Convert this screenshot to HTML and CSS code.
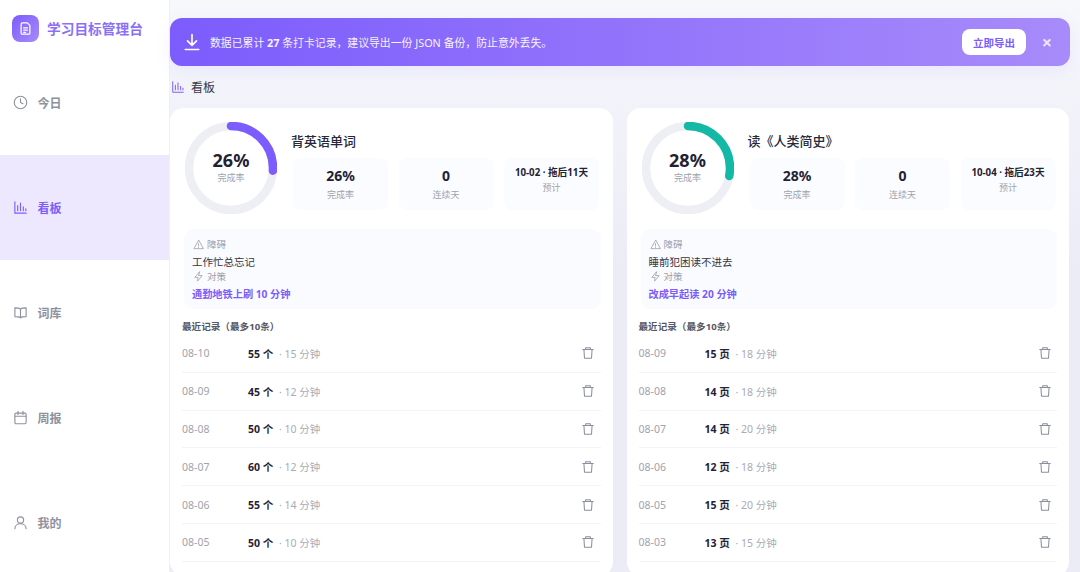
FILE: index.html
```html
<!DOCTYPE html>
<html lang="zh-CN">
<head>
    <meta charset="UTF-8">
    <meta name="viewport" content="width=device-width, initial-scale=1.0">
    <title>学习目标管理台</title>
    <link rel="stylesheet" href="styles.css">
</head>
<body>
    <svg class="sprite" aria-hidden="true">
        <symbol id="i-file" viewBox="0 0 24 24"><path d="M7 3h8l4 4v12a2 2 0 0 1-2 2H7a2 2 0 0 1-2-2V5a2 2 0 0 1 2-2z"/><path d="M9 11h6M9 14.500h6M9 18h3"/></symbol>
        <symbol id="i-download" viewBox="0 0 24 24"><path d="M12 2v14M6 10.500l6 6 6-6M3 22h18"/></symbol>
        <symbol id="i-chart" viewBox="0 0 24 24"><path d="M3 3v18h18"/><path d="M7.500 17V9M12 17V5M16.500 17v-6M20.500 17v-3"/></symbol>
        <symbol id="i-clock" viewBox="0 0 24 24"><circle cx="12" cy="12" r="10"/><path d="M12 6v6l4 2"/></symbol>
        <symbol id="i-book" viewBox="0 0 24 24"><path d="M12 6.500C10.500 5 8 4.500 3 4.500v14c5 0 7.500.5 9 2 1.500-1.500 4-2 9-2v-14c-5 0-7.500.5-9 2zM12 6.500v14"/></symbol>
        <symbol id="i-calendar" viewBox="0 0 24 24"><rect x="3" y="5" width="18" height="17" rx="2"/><path d="M8 2v5M16 2v5M3 10h18"/></symbol>
        <symbol id="i-user" viewBox="0 0 24 24"><circle cx="12" cy="8" r="5"/><path d="M3 22c0-5 4-8 9-8s9 3 9 8"/></symbol>
        <symbol id="i-trash" viewBox="0 0 24 24"><path d="M3 6h18M8 6V3h8v3M5 6l1 15h12l1-15"/></symbol>
        <symbol id="i-alert" viewBox="0 0 24 24"><path d="M12 3L2 21h20z"/><path d="M12 10v5M12 18v.5"/></symbol>
        <symbol id="i-zap" viewBox="0 0 24 24"><path d="M14 2L4 14h7l-1 8 10-12h-7z"/></symbol>
    </svg>

    <div class="app">
        <!-- Sidebar -->
        <aside class="sidebar">
            <div class="brand">
                <span class="brand-logo"><svg class="icon"><use href="#i-file"/></svg></span>
                <span class="brand-name">学习目标管理台</span>
            </div>
            <nav class="nav">
                <a class="nav-item"><svg class="icon"><use href="#i-clock"/></svg>今日</a>
                <a class="nav-item active"><svg class="icon"><use href="#i-chart"/></svg>看板</a>
                <a class="nav-item"><svg class="icon"><use href="#i-book"/></svg>词库</a>
                <a class="nav-item"><svg class="icon"><use href="#i-calendar"/></svg>周报</a>
                <a class="nav-item"><svg class="icon"><use href="#i-user"/></svg>我的</a>
            </nav>
        </aside>

        <main class="main">
            <!-- Backup banner -->
            <div class="banner">
                <svg class="icon banner-icon"><use href="#i-download"/></svg>
                <p class="banner-text">数据已累计 <b>27</b> 条打卡记录，建议导出一份 JSON 备份，防止意外丢失。</p>
                <button class="banner-btn">立即导出</button>
                <span class="banner-close">×</span>
            </div>

            <h2 class="page-title"><svg class="icon"><use href="#i-chart"/></svg>看板</h2>

            <div class="cards">
                <!-- Card 1 -->
                <section class="card">
                    <div class="card-top">
                        <div class="ring">
                            <svg viewBox="0 0 92 92">
                                <circle class="ring-bg" cx="46" cy="46" r="42"/>
                                <circle class="ring-bar" cx="46" cy="46" r="42" stroke-dasharray="68.6 264"/>
                            </svg>
                            <div class="ring-text"><strong>26%</strong><span>完成率</span></div>
                        </div>
                        <div class="card-info">
                            <h3>背英语单词</h3>
                            <div class="stats">
                                <div class="stat"><strong>26%</strong><span>完成率</span></div>
                                <div class="stat"><strong>0</strong><span>连续天</span></div>
                                <div class="stat stat-small"><strong>10-02 · 拖后11天</strong><span>预计</span></div>
                            </div>
                        </div>
                    </div>
                    <div class="plan">
                        <div class="plan-label"><svg class="icon"><use href="#i-alert"/></svg>障碍</div>
                        <div class="plan-text">工作忙总忘记</div>
                        <div class="plan-label"><svg class="icon"><use href="#i-zap"/></svg>对策</div>
                        <div class="plan-fix">通勤地铁上刷 10 分钟</div>
                    </div>
                    <div class="records-title">最近记录（最多10条）</div>
                    <ul class="records">
                        <li><span class="date">08-10</span><span class="amount"><b>55 个</b> · 15 分钟</span><svg class="icon"><use href="#i-trash"/></svg></li>
                        <li><span class="date">08-09</span><span class="amount"><b>45 个</b> · 12 分钟</span><svg class="icon"><use href="#i-trash"/></svg></li>
                        <li><span class="date">08-08</span><span class="amount"><b>50 个</b> · 10 分钟</span><svg class="icon"><use href="#i-trash"/></svg></li>
                        <li><span class="date">08-07</span><span class="amount"><b>60 个</b> · 12 分钟</span><svg class="icon"><use href="#i-trash"/></svg></li>
                        <li><span class="date">08-06</span><span class="amount"><b>55 个</b> · 14 分钟</span><svg class="icon"><use href="#i-trash"/></svg></li>
                        <li><span class="date">08-05</span><span class="amount"><b>50 个</b> · 10 分钟</span><svg class="icon"><use href="#i-trash"/></svg></li>
                    </ul>
                </section>

                <!-- Card 2 -->
                <section class="card">
                    <div class="card-top">
                        <div class="ring ring-green">
                            <svg viewBox="0 0 92 92">
                                <circle class="ring-bg" cx="46" cy="46" r="42"/>
                                <circle class="ring-bar" cx="46" cy="46" r="42" stroke-dasharray="73.9 264"/>
                            </svg>
                            <div class="ring-text"><strong>28%</strong><span>完成率</span></div>
                        </div>
                        <div class="card-info">
                            <h3>读《人类简史》</h3>
                            <div class="stats">
                                <div class="stat"><strong>28%</strong><span>完成率</span></div>
                                <div class="stat"><strong>0</strong><span>连续天</span></div>
                                <div class="stat stat-small"><strong>10-04 · 拖后23天</strong><span>预计</span></div>
                            </div>
                        </div>
                    </div>
                    <div class="plan">
                        <div class="plan-label"><svg class="icon"><use href="#i-alert"/></svg>障碍</div>
                        <div class="plan-text">睡前犯困读不进去</div>
                        <div class="plan-label"><svg class="icon"><use href="#i-zap"/></svg>对策</div>
                        <div class="plan-fix">改成早起读 20 分钟</div>
                    </div>
                    <div class="records-title">最近记录（最多10条）</div>
                    <ul class="records">
                        <li><span class="date">08-09</span><span class="amount"><b>15 页</b> · 18 分钟</span><svg class="icon"><use href="#i-trash"/></svg></li>
                        <li><span class="date">08-08</span><span class="amount"><b>14 页</b> · 18 分钟</span><svg class="icon"><use href="#i-trash"/></svg></li>
                        <li><span class="date">08-07</span><span class="amount"><b>14 页</b> · 20 分钟</span><svg class="icon"><use href="#i-trash"/></svg></li>
                        <li><span class="date">08-06</span><span class="amount"><b>12 页</b> · 18 分钟</span><svg class="icon"><use href="#i-trash"/></svg></li>
                        <li><span class="date">08-05</span><span class="amount"><b>15 页</b> · 20 分钟</span><svg class="icon"><use href="#i-trash"/></svg></li>
                        <li><span class="date">08-03</span><span class="amount"><b>13 页</b> · 15 分钟</span><svg class="icon"><use href="#i-trash"/></svg></li>
                    </ul>
                </section>
            </div>
        </main>
    </div>
</body>
</html>
```

FILE: styles.css
```css
* { margin: 0; padding: 0; box-sizing: border-box; }
html, body { height: 100%; overflow: hidden; }
body { font-family: "Noto Sans", "Noto Sans CJK SC", sans-serif; color: #1f2233; background: #f4f5fb; }

.sprite { display: none; }
.icon { fill: none; stroke: currentColor; stroke-width: 2; stroke-linecap: round; stroke-linejoin: round; flex-shrink: 0; }

.app { display: flex; height: 100vh; }

/* sidebar */
.sidebar { width: 170px; flex-shrink: 0; display: flex; flex-direction: column; background: #fff; border-right: 1px solid #eef0f6; }
.brand { height: 50px; flex-shrink: 0; display: flex; align-items: flex-start; gap: 8px; padding: 15px 0 0 12px; }
.brand-logo { width: 27px; height: 27px; border-radius: 8px; display: flex; align-items: center; justify-content: center; color: #fff; background: linear-gradient(135deg, #7c5cfc, #a78bfa); }
.brand-logo .icon { width: 15px; height: 15px; }
.brand-name { font-size: 13.700px; line-height: 28px; font-weight: 700; color: #8b6ff5; }
.nav { display: flex; flex-direction: column; }
.nav-item { height: 105px; flex-shrink: 0; display: flex; align-items: center; gap: 10px; padding-left: 12.500px; font-size: 12px; font-weight: 700; color: #8e929e; }
.nav-item .icon { width: 15px; height: 15px; stroke-width: 1.800; }
.nav-item.active { background: #eee8fe; color: #7c5cfc; }

/* main */
.main { flex: 1; min-width: 0; padding: 18px 10px 0 0; background: linear-gradient(180deg, #f7f8fc, #ebecf6 260px); }

.banner { height: 48px; display: flex; align-items: center; padding: 0 17px 0 13px; border-radius: 12px; color: #fff; background: linear-gradient(90deg, #7c5cfc, #a78bfa); box-shadow: 0 6px 18px rgba(124, 92, 252, 0.08); }
.banner-icon { width: 18px; height: 18px; margin-right: 9px; stroke-width: 2.200; }
.banner-text { flex: 1; font-size: 10.850px; opacity: 0.92; }
.banner-btn { width: 64px; height: 26px; border: none; border-radius: 8px; background: #fff; color: #7c5cfc; font: 700 10.500px "Noto Sans", "Noto Sans CJK SC", sans-serif; }
.banner-close { width: 12px; margin-left: 15px; font-size: 18px; line-height: 1; font-weight: 700; text-align: center; color: rgba(255, 255, 255, 0.8); }

.page-title { height: 42px; display: flex; align-items: center; gap: 6px; padding-left: 1px; font-size: 12px; font-weight: 400; color: #333645; }
.page-title .icon { width: 14px; height: 14px; color: #7c5cfc; stroke-width: 1.700; }

.cards { display: grid; grid-template-columns: 1fr 1fr; gap: 14px; margin-right: 1px; }
.card { padding: 14px 12px; background: #fff; border-radius: 14px; }

.card-top { display: flex; gap: 14px; padding-left: 3px; margin-bottom: 14px; }
.ring { position: relative; width: 92px; height: 93px; flex-shrink: 0; color: #7c5cfc; }
.ring-green { color: #14b8a6; }
.ring svg { display: block; width: 92px; height: 92px; transform: rotate(-90deg); }
.ring circle { fill: none; stroke-width: 8.500; }
.ring-bg { stroke: #eeeff4; }
.ring-bar { stroke: currentColor; stroke-linecap: round; }
.ring-text { position: absolute; inset: 0; padding-bottom: 3px; display: flex; flex-direction: column; align-items: center; justify-content: center; }
.ring-text strong { font-size: 18px; line-height: 22px; color: #1f2233; }
.ring-text span { font-size: 9px; line-height: 14px; color: #a0a3ad; }

.card-info { flex: 1; min-width: 0; padding-top: 9px; }
.card-info h3 { font-size: 13px; line-height: 20px; font-weight: 500; color: #262938; margin-bottom: 7px; }
.stats { display: grid; grid-template-columns: repeat(3, 95px); gap: 10.500px; padding-left: 2px; }
.stat { height: 52px; padding-top: 8px; display: flex; flex-direction: column; align-items: center; border-radius: 8px; background: #fbfcff; }
.stat strong { font-size: 14px; line-height: 20px; color: #1f2233; }
.stat span { font-size: 9px; line-height: 18px; color: #a0a3ad; }
.stat-small { padding-top: 7px; }
.stat-small strong { font-size: 9.700px; line-height: 16px; white-space: nowrap; }
.stat-small span { line-height: 14px; }

.plan { height: 80px; margin: 0 0 0 2px; padding: 8px; border-radius: 10px; background: #fafbff; }
.plan-label { display: flex; align-items: center; gap: 3px; padding-left: 1px; height: 14px; font-size: 9.500px; color: #9a9da8; }
.plan-label .icon { width: 11px; height: 11px; stroke-width: 1.700; }
.plan-text { font-size: 10.500px; line-height: 14px; margin-top: 4px; color: #333645; }
.plan-fix { font-size: 10.200px; line-height: 18px; margin-top: 2px; font-weight: 700; color: #7c5cfc; }

.records-title { margin-top: 11px; font-size: 9.600px; line-height: 14px; font-weight: 700; color: #555866; }
.records { list-style: none; margin-top: 1px; }
.records li { height: 37.800px; display: flex; align-items: center; border-bottom: 1px solid #f3f4f7; }
.date { width: 66px; font-size: 10.500px; color: #a0a3ad; }
.amount { flex: 1; font-size: 10.500px; color: #a8abb5; }
.amount b { font-size: 10.500px; color: #1f2233; margin-right: 3px; }
.records .icon { width: 14px; height: 14px; margin-right: 5.500px; color: #8a8f9c; stroke-width: 1.800; }
```
